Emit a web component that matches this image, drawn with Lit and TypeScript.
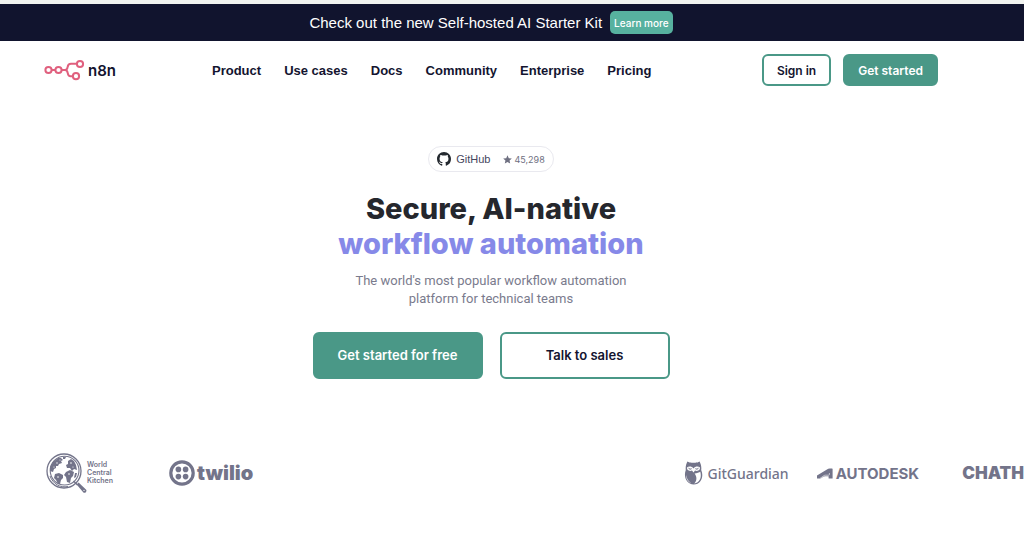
import { LitElement, html, css, svg } from "lit";
import { customElement } from "lit/decorators.js";

const NAV = ["Product", "Use cases", "Docs", "Community", "Enterprise", "Pricing"];

const n8nMark = svg`<svg class="mark" viewBox="0 0 40 22" aria-hidden="true">
  <g fill="none" stroke="#e0607e" stroke-width="2">
    <circle cx="4" cy="11" r="3.1"/><circle cx="14" cy="11" r="3.1"/>
    <circle cx="35.5" cy="5" r="3.1"/><circle cx="31.5" cy="17.2" r="3.1"/>
    <path d="M7 11H11M17 11H20.5C25 11 21 4.8 26.5 4.8H32.4M20.5 11C25 11 21.5 17.2 26 17.2H28.4"/>
  </g></svg>`;

const githubMark = svg`<svg class="github-mark" viewBox="0 0 16 16" aria-hidden="true"><path fill="#24292f" d="M8 0C3.58 0 0 3.58 0 8c0 3.54 2.29 6.53 5.47 7.59.4.07.55-.17.55-.38 0-.19-.01-.82-.01-1.49-2.01.37-2.53-.49-2.69-.94-.09-.23-.48-.94-.82-1.13-.28-.15-.68-.52-.01-.53.63-.01 1.08.58 1.23.82.72 1.21 1.87.87 2.33.66.07-.52.28-.87.51-1.07-1.78-.2-3.64-.89-3.64-3.95 0-.87.31-1.59.82-2.15-.08-.2-.36-1.02.08-2.12 0 0 .67-.21 2.2.82.64-.18 1.32-.27 2-.27s1.36.09 2 .27c1.53-1.04 2.2-.82 2.2-.82.44 1.1.16 1.92.08 2.12.51.56.82 1.27.82 2.15 0 3.07-1.87 3.75-3.65 3.95.29.25.54.73.54 1.48 0 1.07-.01 1.93-.01 2.2 0 .21.15.46.55.38A8.01 8.01 0 0 0 16 8c0-4.42-3.58-8-8-8z"/></svg>`;

const star = svg`<svg class="star" viewBox="0 0 16 16" aria-hidden="true"><path fill="#6f7081" d="M8 0.6l2.3 5 5.4.6-4 3.7 1.1 5.4L8 12.6l-4.8 2.7 1.1-5.4-4-3.7 5.4-.6z"/></svg>`;

const globe = svg`<svg class="globe" viewBox="0 0 41 41" aria-hidden="true">
  <g fill="none" stroke="#73748a">
    <circle cx="18" cy="18" r="17" stroke-width="1.3"/><circle cx="18.6" cy="17.6" r="14.4" stroke-width="1.1"/>
    <path d="M4 23C7 31 14 35 22 33.5" stroke-width="1"/>
  </g>
  <g fill="#73748a">
    <path d="M12 5l3 0 2 2-2 1 1 2-3 1-1 2-2 0 0 2-2 1-1 3-3-1 0-4 3-5zM17 4l3 0-1 2-2 0z"/>
    <path d="M9 21l4-1 4 2 0 3-2 2-1 4-2 0-2-4-2-2z"/>
    <path d="M20 12l2-1 0-3 3-2 3 2 2 4 1 5-3-1-2 2-2-3-3 0zM20 19l4-2 4 2-1 4-2 2-1 5-3-1-1-5-2-2z"/>
    <path d="M29 20l2 0-1 4-2 1z"/>
    <path d="M30.6 31.4l2-2 7.6 7.4c1 1.6-1.2 3.8-2.8 2.6z"/>
  </g>
  <g fill="#fff"><circle cx="11" cy="10" r=".7"/><circle cx="8" cy="14" r=".6"/><circle cx="12" cy="24" r=".8"/><circle cx="25" cy="10" r=".8"/><circle cx="23" cy="21" r=".8"/><circle cx="27" cy="14" r=".6"/><circle cx="38" cy="37.4" r=".6"/><circle cx="14" cy="7" r=".5"/></g>
  <path d="M27.5 28l4 4" stroke="#73748a" stroke-width="1.4"/></svg>`;

const twilioMark = svg`<svg class="twilio-mark" viewBox="0 0 26 26" aria-hidden="true">
  <circle cx="13" cy="13" r="11.2" fill="none" stroke="#73748a" stroke-width="3.2"/>
  <g fill="#73748a"><circle cx="9.4" cy="9.4" r="2.8"/><circle cx="16.6" cy="9.4" r="2.8"/><circle cx="9.4" cy="16.6" r="2.8"/><circle cx="16.6" cy="16.6" r="2.8"/></g></svg>`;

const owl = svg`<svg class="owl" viewBox="0 0 19 24" aria-hidden="true">
  <path fill="#73748a" d="M3.4.6C5.5 2 7.4 1.7 9.5 1.7S13.5 2 15.6.6C17 3.4 17.6 6 17.2 9 20 15 17.4 23.5 9.8 23.5 2 23.5-.6 15 1.8 9 1.4 6 2 3.4 3.4.6z"/>
  <path fill="#fff" d="M3 6.6C4.5 4.9 7.7 5 9.5 7.4 11.3 5 14.5 4.9 16 6.6 16.4 9.2 13.6 10.7 11 9.5L9.5 11.4 8 9.5C5.4 10.7 2.6 9.2 3 6.6z"/>
  <path fill="#fff" d="M10.6 12.4C13 12.3 15.2 11.7 16.3 10.8 18 16.7 15.5 22 10.2 22.4 13.2 19.6 13 15.4 10.6 12.4zM2.2 14C2.6 17.6 4.4 20.6 7 21.8 4 21 1.8 17.6 2.2 14z"/>
  <path d="M4.5 7.2Q6 9 7.6 7.7M11.4 7.7Q13 9 14.5 7.2" fill="none" stroke="#73748a"/></svg>`;

const autodeskMark = svg`<svg class="autodesk-mark" viewBox="0 0 16 11" aria-hidden="true"><path fill="#73748a" d="M0 10.6V7.6L11.2.8Q11.9.4 12.8.4H15Q15.6.4 15.6 1V10.6H11.6V8.2H8.2Q7.4 8.2 6.8 8.6L3.6 10.6z"/><path d="M3 10.4L7 7.6Q7.6 7.2 8.4 7.2H11.6Q12.4 7.2 12.4 6.4V5" fill="none" stroke="#fff" stroke-width=".6"/></svg>`;

@customElement("app-root")
export class AppRoot extends LitElement {
  static styles = css`
    :host {
      display: block;
      overflow-x: hidden;
      font-family: Inter, "Liberation Sans", sans-serif;
      color: #13142f;
      background: #fff;
      --gutter: 42px;
      --green: #4a9887;
      --ink: #13142f;
      --muted: #73748a;
      --grotesque: "Liberation Sans", Arial, sans-serif;
    }
    * { box-sizing: border-box; }
    a { color: inherit; text-decoration: none; }
    button { font: inherit; cursor: pointer; margin: 0; }
    .banner {
      display: flex; align-items: center; justify-content: center; gap: 8px;
      height: 41px; padding-right: var(--gutter);
      border-top: 4px solid #f1f3f0;
      background: #11142e; color: #fff;
      font: 15px var(--grotesque);
    }
    .learn {
      height: 23px; padding: 0 4px; border: 0; border-radius: 5px;
      background: #57b19f; color: #fff;
      font: 500 10px Inter, sans-serif;
    }
    .header {
      display: flex; align-items: center;
      height: 58px; padding: 0 86px 0 44px;
    }
    .brand { display: flex; align-items: center; gap: 3px; width: 168px; font-size: 15px; font-weight: 600; }
    .mark { width: 41px; height: 22px; }
    .nav { display: flex; gap: 23px; font: 700 13px var(--grotesque); }
    .actions { display: flex; gap: 12px; margin-left: auto; }
    .btn {
      border: 2px solid var(--green); border-radius: 6px; padding: 0;
      background: #fff; color: var(--ink); font-weight: 600; white-space: nowrap;
    }
    .primary { background: var(--green); color: #fff; }
    .small { height: 32px; padding: 0 13px; font-size: 12px; }
    .large { width: 170px; height: 47px; padding-bottom: 2px; font-size: 13px; }
    .hero {
      display: flex; flex-direction: column; align-items: center;
      padding: 47px var(--gutter) 0 0; text-align: center;
    }
    .badge {
      display: flex; align-items: center; height: 26px; padding: 0 8px;
      border: 1px solid #e9e9ef; border-radius: 13px;
      font: 11px var(--grotesque); color: #45465e;
    }
    .github-mark { width: 14px; height: 14px; margin-right: 5px; }
    .star { width: 9px; height: 9px; margin: 0 2px 0 13px; }
    .count { font: 9px Inter, sans-serif; color: #6f7081; }
    h1 { margin: 19px 0 0; font-size: 29px; line-height: 35px; font-weight: 800; color: #25272d; }
    .accent { display: block; color: #8689e8; }
    .lead { max-width: 300px; margin: 11px 0 0; font: 13px/18px Roboto, sans-serif; color: #7a7b8d; }
    .cta { display: flex; gap: 17px; margin-top: 24px; }
    .logos {
      display: flex; align-items: center;
      height: 42px; margin-top: 73px; padding-left: 46px; color: var(--muted);
    }
    .logo { display: flex; flex: none; align-items: center; white-space: nowrap; }
    .globe { width: 41px; height: 41px; }
    .wck { font-size: 7px; line-height: 8px; font-weight: 600; margin-right: 56px; }
    .twilio { gap: 2px; margin-right: auto; font-size: 20px; font-weight: 900; }
    .twilio-mark { width: 26px; height: 26px; }
    .guardian { gap: 4px; margin-right: 28px; font: 500 14px "Noto Sans", sans-serif; }
    .owl { width: 19px; height: 24px; }
    .autodesk { gap: 3px; margin-right: 43px; font-size: 15px; font-weight: 700; }
    .autodesk-mark { width: 16px; height: 11px; }
    .chatham { font-size: 17px; font-weight: 900; }
  `;

  render() {
    return html`
      <div class="banner">
        <span>Check out the new Self-hosted AI Starter Kit</span>
        <button class="learn">Learn more</button>
      </div>
      <header class="header">
        <a class="brand" href="#">${n8nMark}<span>n8n</span></a>
        <nav class="nav">${NAV.map((item) => html`<a href="#">${item}</a>`)}</nav>
        <div class="actions">
          <button class="btn small">Sign in</button>
          <button class="btn small primary">Get started</button>
        </div>
      </header>
      <main>
        <section class="hero">
          <a class="badge" href="#">${githubMark}<span>GitHub</span>${star}<span class="count">45,298</span></a>
          <h1>Secure, AI-native <span class="accent">workflow automation</span></h1>
          <p class="lead">The world's most popular workflow automation<br />platform for technical teams</p>
          <div class="cta">
            <button class="btn large primary">Get started for free</button>
            <button class="btn large">Talk to sales</button>
          </div>
        </section>
        <section class="logos" aria-label="Customers">
          <div class="logo wck">${globe}<span>World<br />Central<br />Kitchen</span></div>
          <div class="logo twilio">${twilioMark}<span>twilio</span></div>
          <div class="logo guardian">${owl}<span>GitGuardian</span></div>
          <div class="logo autodesk">${autodeskMark}<span>AUTODESK</span></div>
          <div class="logo chatham"><span>CHATH</span></div>
        </section>
      </main>
    `;
  }
}
